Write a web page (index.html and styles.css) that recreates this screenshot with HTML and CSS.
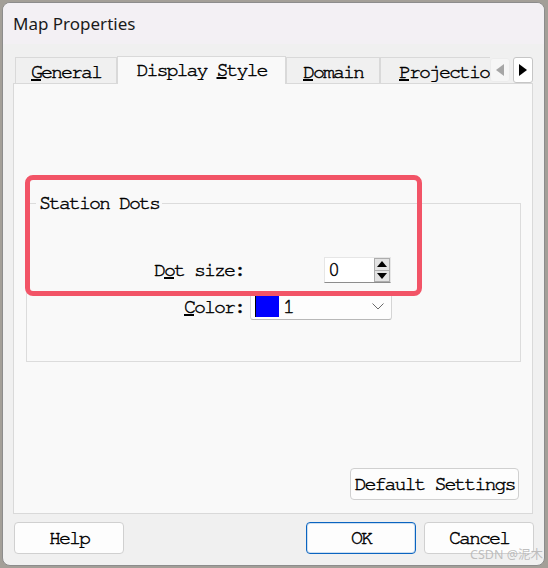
FILE: index.html
```html
<!DOCTYPE html>
<html lang="en">
<head>
    <meta charset="UTF-8">
    <title>Map Properties</title>
    <link rel="stylesheet" href="styles.css">
</head>
<body>

    <div class="window">
        <div class="titlebar">Map Properties</div>

        <div class="dialog">
            <div class="tabrow">
                <div class="tabs">
                    <div class="tab tab-general"><u>G</u>eneral</div>
                    <div class="tab tab-display active">Display <u>S</u>tyle</div>
                    <div class="tab tab-domain"><u>D</u>omain</div>
                    <div class="tab tab-projection"><u>P</u>rojection</div>
                </div>
                <div class="tab-scroll">
                    <div class="scroll-btn disabled">
                        <svg viewBox="0 0 8 12" width="8" height="12"><path d="M8 0v12L0 6z"/></svg>
                    </div>
                    <div class="scroll-btn">
                        <svg viewBox="0 0 8 12" width="8" height="12"><path d="M0 0v12l8-6z"/></svg>
                    </div>
                </div>
            </div>

            <div class="panel">
                <fieldset class="group">
                    <legend>Station Dots</legend>
                    <div class="form-grid">
                        <label class="field-label">D<u>o</u>t size:</label>
                        <div class="spin">
                            <span class="spin-value">0</span>
                            <div class="spin-buttons">
                                <div class="spin-btn">
                                    <svg viewBox="0 0 10 6" width="10" height="6"><path d="M0 6h10L5 0z"/></svg>
                                </div>
                                <div class="spin-btn">
                                    <svg viewBox="0 0 10 6" width="10" height="6"><path d="M0 0h10L5 6z"/></svg>
                                </div>
                            </div>
                        </div>

                        <label class="field-label"><u>C</u>olor:</label>
                        <div class="combo">
                            <span class="swatch"></span>
                            <span class="combo-text">1</span>
                            <svg class="chevron" viewBox="0 0 12 7" width="12" height="7"><path d="M0.5 0.5l5.5 5.5 5.5-5.5"/></svg>
                        </div>
                    </div>
                </fieldset>

                <button class="btn btn-default">Default Settings</button>

                <!-- annotation box drawn over the group -->
                <div class="highlight"></div>
            </div>

            <div class="footer">
                <button class="btn">Help</button>
                <div class="spacer"></div>
                <button class="btn btn-ok">OK</button>
                <button class="btn">Cancel</button>
            </div>
        </div>

        <div class="watermark">CSDN @泥木</div>
    </div>

</body>
</html>
```

FILE: styles.css
```css
body {
    margin: 0;
    width: 548px;
    height: 568px;
    overflow: hidden;
    background-color: #a39f98; /* desktop behind the dialog */
    font-family: 'FreeMono', 'Liberation Mono', monospace;
    color: #000;
}

.window {
    position: relative;
    box-sizing: border-box;
    width: 543px;
    height: 564px;
    margin: 2px 0 0 2px;
    border: 1px solid #8c8c8c;
    border-radius: 8px;
    overflow: hidden;
    background-color: #f0f0f0;
}

.titlebar {
    height: 41px;
    display: flex;
    align-items: center;
    padding-left: 10px;
    background-color: #f3f0f4;
    font-family: 'Noto Sans', 'Open Sans', sans-serif;
    font-size: 17px;
    color: #1a1a1a;
}

/* dialog text: thin serif mono, a touch heavier like the bitmap font */
.tab,
.group legend,
.field-label,
.spin-value,
.combo-text,
.btn {
    font-family: 'FreeMono', 'Liberation Mono', monospace;
    font-size: 20px;
    letter-spacing: -2px;
    -webkit-text-stroke: 0.45px #000;
}

.dialog {
    padding: 12px 10px 0 10px;
}

/* Tabs */
.tabrow {
    position: relative;
    z-index: 1;
    display: flex;
    align-items: center;
    height: 28px;
    margin-bottom: -1px;
    padding-left: 2px;
}

.tabs {
    flex: 1;
    display: flex;
    align-items: flex-end;
    height: 28px;
    overflow: hidden;
}

.tab {
    flex: none;
    box-sizing: border-box;
    height: 27px;
    border: 1px solid #d9d9d9;
    background-color: #f0f0f0;
    text-align: center;
    line-height: 28px;
    white-space: nowrap;
}
.tab.active {
    height: 28px;
    border-bottom: none;
    background-color: #f9f9f9;
    line-height: 26px;
}
.tab-general { width: 102px; }
.tab-display { width: 169px; }
.tab-domain { width: 94px; }
.tab-projection { width: 138px; }

.tab-scroll {
    display: flex;
    align-items: center;
    gap: 3px;
    margin-right: 1px;
}

.scroll-btn {
    box-sizing: border-box;
    width: 20px;
    height: 26px;
    display: flex;
    align-items: center;
    justify-content: center;
    background-color: #fff;
    border: 1px solid #c6c6c6;
    border-radius: 3px;
}
.scroll-btn svg {
    fill: #000;
}
.scroll-btn.disabled {
    height: 24px;
    background-color: #f6f6f6;
    border-color: #ececec;
}
.scroll-btn.disabled svg {
    fill: #a6a6a6;
}

/* Tab page */
.panel {
    position: relative;
    box-sizing: border-box;
    height: 431px;
    margin-right: 1px;
    display: flex;
    flex-direction: column;
    background-color: #f9f9f9;
    border: 1px solid #d9d9d9;
}

.group {
    margin: 109px 11px 0 12px;
    padding: 44px 0 41px 0;
    border: 1px solid #dcdcdc;
    min-width: 0;
}
.group legend {
    margin-left: 9px;
    padding: 0 3px;
    line-height: 20px;
}

.form-grid {
    display: grid;
    grid-template-columns: 217px auto;
    column-gap: 6px;
    row-gap: 10px;
    justify-content: start;
    align-items: center;
}

.field-label {
    text-align: right;
    white-space: nowrap;
}

.spin {
    box-sizing: border-box;
    width: 67px;
    height: 26px;
    margin-left: 74px;
    display: flex;
    background-color: #fff;
    border: 1px solid #e6e6e6;
    border-bottom-color: #8d8d8d;
}
.spin-value {
    flex: 1;
    padding-left: 3px;
    line-height: 25px;
}
.spin-buttons {
    display: flex;
    flex-direction: column;
    width: 16px;
}
.spin-btn {
    flex: 1;
    display: flex;
    align-items: center;
    justify-content: center;
    background-color: #e3e3e3;
    border: 1px solid #adadad;
}
.spin-btn + .spin-btn {
    border-top: none;
}
.spin-btn svg {
    fill: #000;
}

.combo {
    box-sizing: border-box;
    width: 142px;
    height: 27px;
    display: flex;
    align-items: center;
    padding-left: 4px;
    background-color: #fdfdfd;
    border: 1px solid #d5d5d5;
    border-bottom-color: #b8b8b8;
    border-radius: 3px;
}
.swatch {
    box-sizing: border-box;
    width: 24px;
    height: 21px;
    background-color: #0000ff;
    border-left: 1px solid #000;
}
.combo-text {
    margin-left: 4px;
}
.chevron {
    margin-left: auto;
    margin-right: 7px;
    fill: none;
    stroke: #6b6b6b;
    stroke-width: 1;
}

/* Buttons */
.btn {
    box-sizing: border-box;
    width: 110px;
    height: 32px;
    padding: 0;
    background-color: #fdfdfd;
    border: 1px solid #d0d0d0;
    border-radius: 4px;
    color: #000;
}
.btn-default {
    width: 169px;
    margin-top: auto;
    margin-right: 13px;
    margin-bottom: 13px;
    align-self: flex-end;
}
.btn-ok {
    border-color: #0a64c0;
    box-shadow: inset 0 0 0 1px rgba(10, 100, 192, 0.2);
}

.footer {
    display: flex;
    gap: 8px;
    margin-top: 8px;
    padding-left: 1px;
}
.spacer {
    flex: 1;
}

/* Red annotation frame over the group box */
.highlight {
    position: absolute;
    left: 11px;
    top: 91px;
    box-sizing: border-box;
    width: 397px;
    height: 121px;
    border: 5px solid #f25467;
    border-radius: 8px;
    pointer-events: none;
}

.watermark {
    position: absolute;
    right: 1px;
    bottom: 2px;
    font-family: 'Noto Sans', 'Noto Sans CJK SC', sans-serif;
    font-size: 12.5px;
    color: rgba(180, 180, 180, 0.85);
}
```
